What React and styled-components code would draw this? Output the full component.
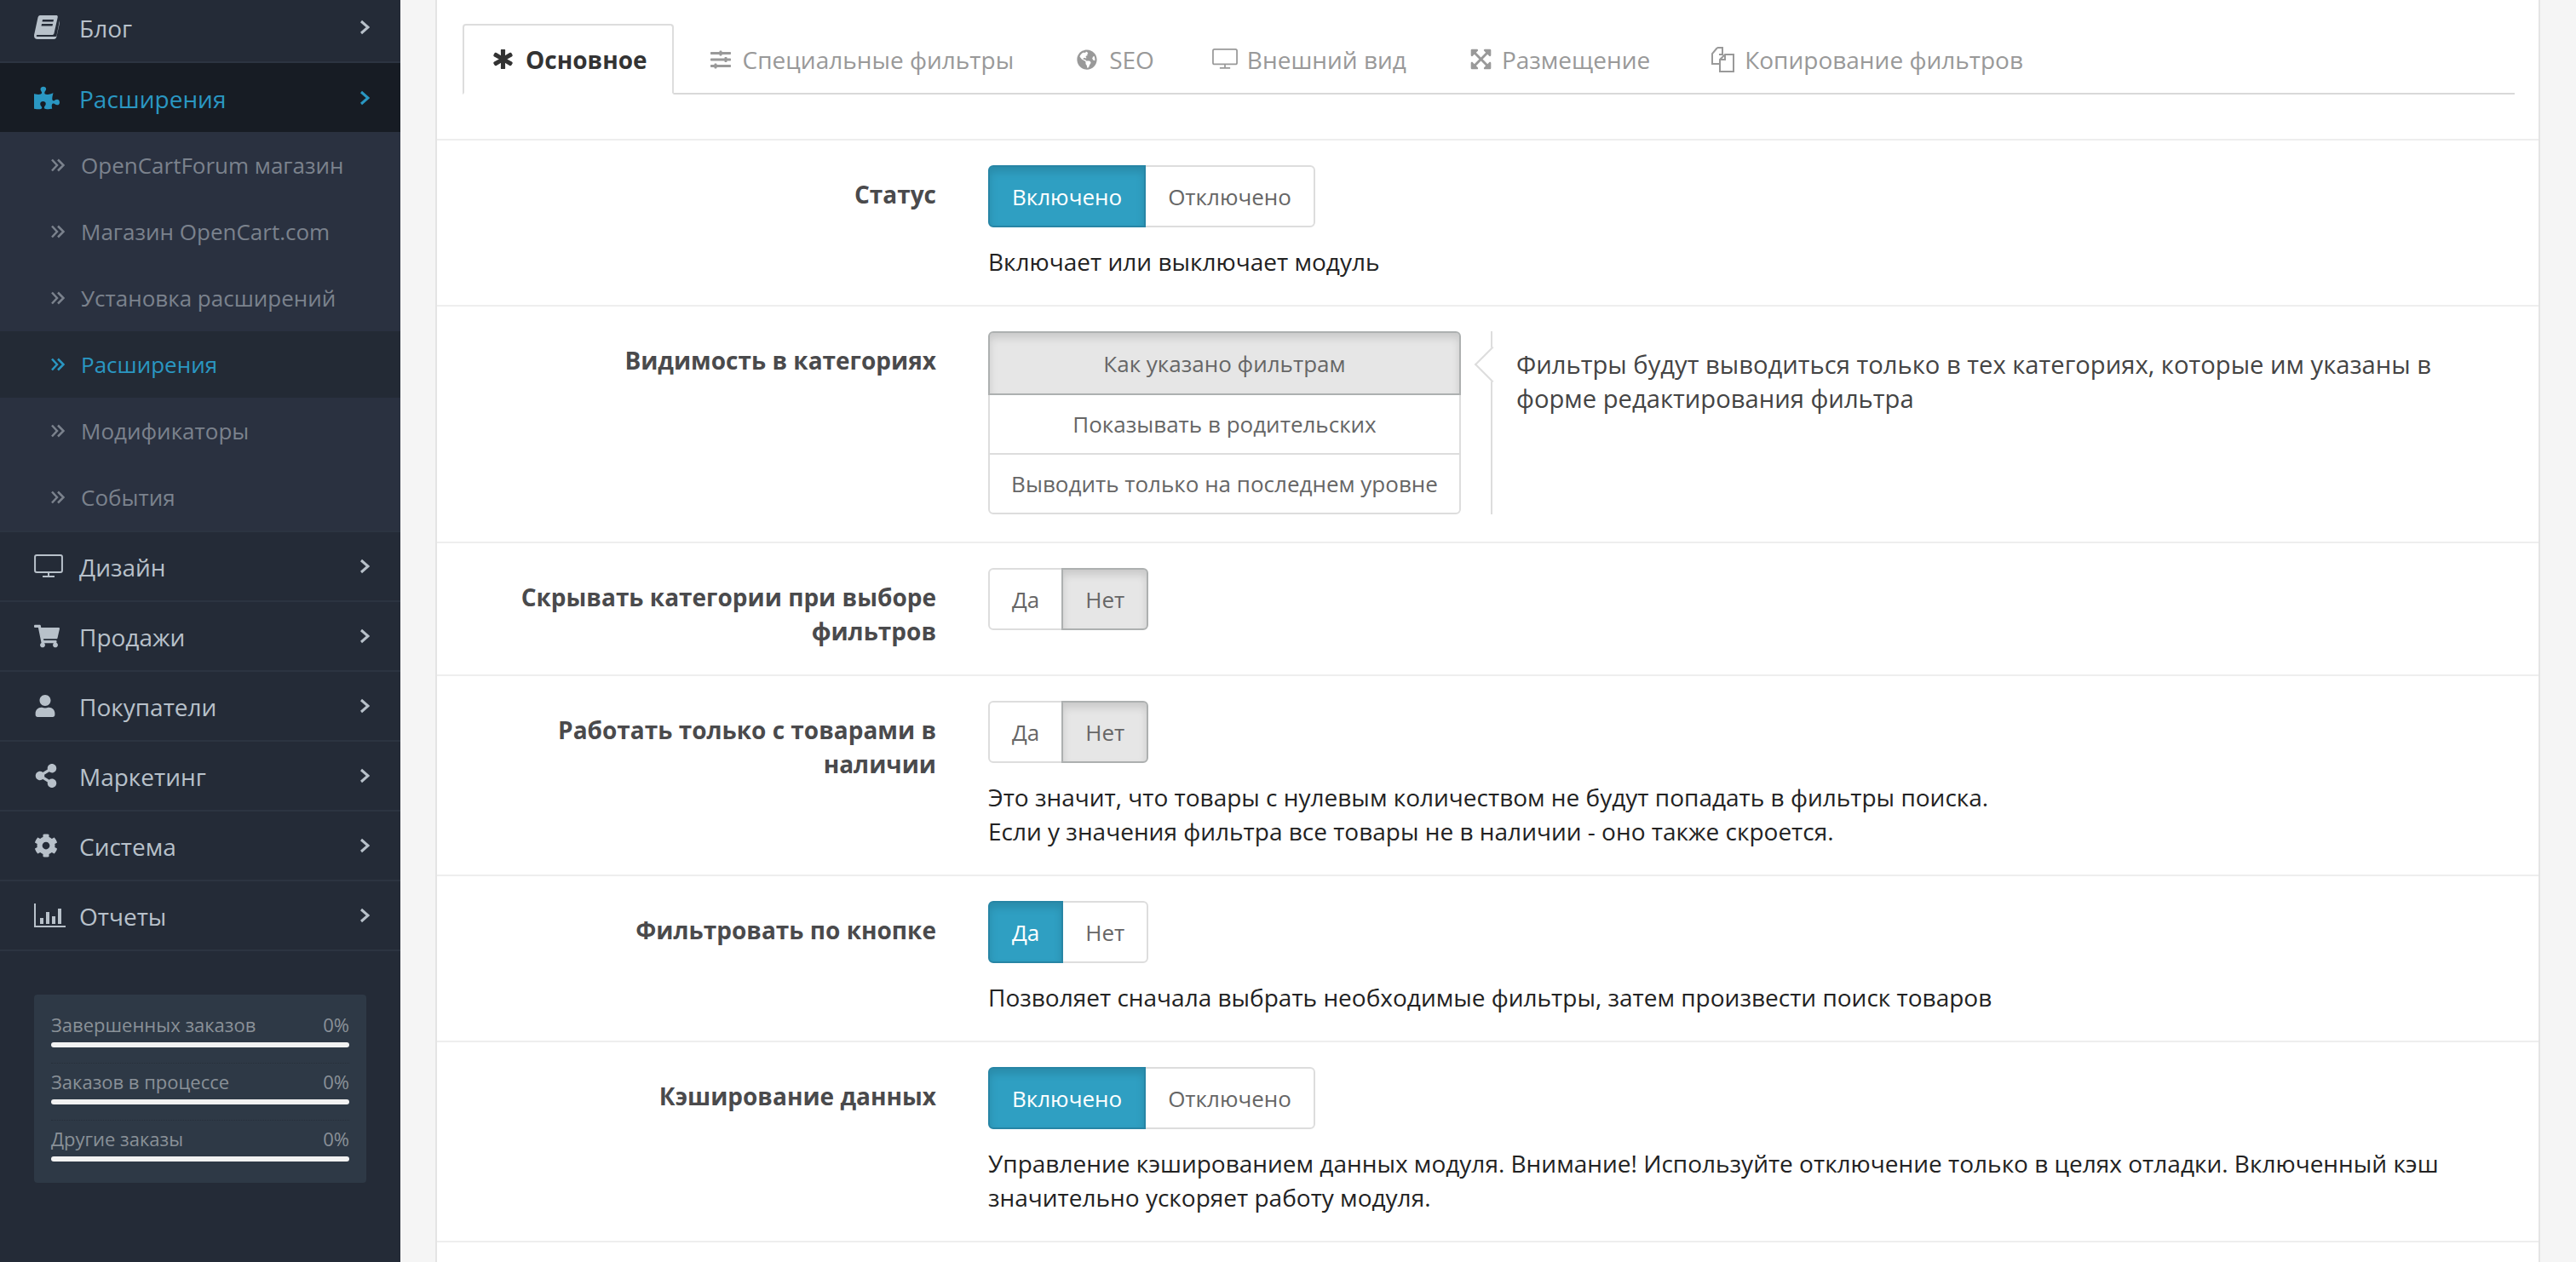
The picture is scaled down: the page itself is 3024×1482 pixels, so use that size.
import React from "react";
import styled, { createGlobalStyle } from "styled-components";
import {
  FaPuzzlePiece, FaShoppingCart, FaUser, FaShareAlt, FaCog,
  FaAsterisk, FaSlidersH, FaGlobeAmericas, FaExpandArrowsAlt,
} from "react-icons/fa";

const GlobalStyle = createGlobalStyle`
  html, body {
    margin: 0;
    height: 100%;
    overflow: hidden;
    background: #f5f5f5;
  }
  body {
    font-family: "Open Sans", "Noto Sans", sans-serif;
    font-size: 26px;
    line-height: 40px;
    color: #222;
  }
  #root { height: 100%; }
  * { box-sizing: border-box; }
`;

const Page = styled.div`
  display: flex;
  height: 1482px;
  overflow: hidden;
`;

const Sidebar = styled.nav`
  width: 470px;
  flex-shrink: 0;
  background: #242b37;
`;

const Menu = styled.div`
  margin-top: -8px;
`;

const MainItem = styled.div`
  display: flex;
  align-items: center;
  height: ${p => (p.$open ? 81 : 82)}px;
  padding: 0 36px 0 40px;
  font-size: 28px;
  color: ${p => (p.$open ? "#2a97c2" : "#b8c1ca")};
  background: ${p => (p.$open ? "#171c24" : "transparent")};
  border-bottom: ${p => (p.$open ? "none" : "2px solid #2c3441")};
`;

const IconSlot = styled.span`
  display: flex;
  align-items: center;
  width: 53px;
  font-size: 30px;
  flex-shrink: 0;
`;

const ItemLabel = styled.span`
  flex: 1;
  padding-top: 2px;
`;

const SubMenu = styled.div`
  background: #2a3140;
  border-bottom: 2px solid #2c3441;
`;

const SubItem = styled.div`
  display: flex;
  align-items: center;
  height: 78px;
  padding-left: 60px;
  color: ${p => (p.$active ? "#2a97c2" : "#7b828d")};
  background: ${p => (p.$active ? "#232a35" : "transparent")};
`;

const SubIcon = styled.span`
  display: flex;
  width: 35px;
`;

const Stats = styled.div`
  margin: 51px 40px 0;
  padding: 14px 20px 0;
  height: 221px;
  background: #2e3946;
  border-radius: 4px;
`;

const Stat = styled.div`
  height: 67px;
  border-bottom: ${p => (p.$last ? "none" : "1px dotted #262e39")};
`;

const StatLine = styled.div`
  display: flex;
  justify-content: space-between;
  font-size: 22px;
  line-height: 42px;
  color: #8a9198;
`;

const StatBar = styled.div`
  height: 6px;
  border-radius: 3px;
  background: #f2f2f2;
`;

const Main = styled.main`
  flex: 1;
  padding: 0 42px 0 41px;
  min-width: 0;
`;

const Panel = styled.div`
  height: 100%;
  background: #fff;
  border-left: 2px solid #e4e4e4;
  border-right: 2px solid #e4e4e4;
`;

const TabsWrap = styled.div`
  padding: 28px 28px 0 30px;
  height: 163px;
`;

const Tabs = styled.div`
  display: flex;
  height: 83px;
  border-bottom: 2px solid #d9d9d9;
`;

const Tab = styled.div`
  display: flex;
  align-items: center;
  height: ${p => (p.$active ? 83 : 81)}px;
  padding: 0 29px 0 34px;
  margin-right: ${p => p.$gap ?? 7}px;
  font-size: 28px;
  color: ${p => (p.$active ? "#333" : "#999")};
  font-weight: ${p => (p.$active ? 700 : 400)};
  background: #fff;
  border: ${p => (p.$active ? "2px solid #ddd" : "2px solid transparent")};
  border-bottom: ${p => (p.$active ? "2px solid #fff" : "none")};
  border-radius: 4px 4px 0 0;
`;

const TabIcon = styled.span`
  display: flex;
  align-items: center;
  width: ${p => p.$w || 38}px;
`;

const Row = styled.section`
  display: grid;
  grid-template-columns: 586px 1fr;
  column-gap: 61px;
  padding: 29px 30px ${p => p.$bottom || 31}px 0;
  border-top: 2px solid #eee;
`;

const Label = styled.div`
  padding: 14px 0 0 60px;
  text-align: right;
  font-size: 28px;
  font-weight: 700;
  color: #4a4a4c;
`;

const Value = styled.div`
  min-width: 0;
`;

const Toggle = styled.div`
  display: inline-flex;
  vertical-align: top;
`;

const ToggleBtn = styled.div`
  height: 73px;
  padding: 0 26px;
  display: flex;
  align-items: center;
  border: 2px solid ${p => (p.$on ? "#2785a5" : p.$off ? "#adb0b0" : "#ddd")};
  margin-left: ${p => (p.$first ? 0 : -2)}px;
  background: ${p => (p.$on ? "#2f9fc2" : p.$off ? "#e6e6e6" : "#fff")};
  color: ${p => (p.$on ? "#fff" : "#666")};
  box-shadow: ${p => (p.$on || p.$off ? "inset 0 6px 10px rgba(0,0,0,.125)" : "none")};
  border-radius: ${p => (p.$first ? "6px 0 0 6px" : "0 6px 6px 0")};
  position: relative;
  z-index: ${p => (p.$on || p.$off ? 1 : 0)};
`;

const Desc = styled.div`
  margin-top: 20px;
  font-size: 28px;
  color: #222;
`;

const Choice = styled.div`
  display: flex;
`;

const Stack = styled.div`
  width: 555px;
  flex-shrink: 0;
`;

const StackBtn = styled.div`
  height: ${p => (p.$active ? 75 : 72)}px;
  margin-top: ${p => (p.$active ? 0 : -2)}px;
  display: flex;
  align-items: center;
  justify-content: center;
  color: #666;
  background: ${p => (p.$active ? "#e6e6e6" : "#fff")};
  border: 2px solid ${p => (p.$active ? "#adb0b0" : "#ddd")};
  border-radius: ${p => p.$radius || 0};
  box-shadow: ${p => (p.$active ? "inset 0 6px 10px rgba(0,0,0,.125)" : "none")};
  position: relative;
  z-index: ${p => (p.$active ? 1 : 0)};
`;

const Hint = styled.div`
  position: relative;
  margin-left: 35px;
  padding: 19px 0 0 28px;
  width: 1140px;
  font-size: 29.2px;
  border-left: 2px solid #ddd;
  color: #444;
  &::before {
    content: "";
    position: absolute;
    left: -15px;
    top: 24px;
    width: 28px;
    height: 28px;
    background: #fff;
    border-left: 2px solid #ddd;
    border-bottom: 2px solid #ddd;
    transform: rotate(45deg);
  }
`;

const Chevron = () => (
  <svg width="12" height="18" viewBox="0 0 12 18" fill="none" stroke="currentColor" strokeWidth="3">
    <path d="M2 2l8 7-8 7" />
  </svg>
);

const DoubleChevron = () => (
  <svg width="16" height="16" viewBox="0 0 16 16" fill="none" stroke="currentColor" strokeWidth="2.500">
    <path d="M1 1.500 7 8l-6 6.500M8 1.500 14.500 8 8 14.500" />
  </svg>
);

const BookIcon = () => (
  <svg width="30" height="28" viewBox="0 0 30 28">
    <path fill="#b8c1ca" d="M7 0h19c1.500 0 2 1 1.700 2.400L23.500 21c-.3 1.500-1.200 2-2.500 2H4c-1.500 0-1.800 2-.3 2h21c1 0 1.500-.5 1.800-1.500L30 6c.3 0 .3 1 .2 2l-3.800 17c-.4 1.800-1.400 3-3.200 3H4c-2.500 0-4-1.500-4-4 0-1 .2-2 .5-3L4.500 2.500C4.900 1 5.800 0 7 0z" />
    <path fill="#242b37" d="M10 5h13l-.5 2.500h-13zM9 10h13l-.5 2.500h-13z" />
  </svg>
);

const DesktopIcon = ({ color, width = 34 }) => (
  <svg width={width} height={width * 0.82} viewBox="0 0 34 28" fill="none" stroke={color} strokeWidth="2">
    <rect x="1" y="1" width="32" height="20" rx="2" />
    <path d="M17 21v4M10 26h14" />
  </svg>
);

const BarsIcon = () => (
  <svg width="37" height="28" viewBox="0 0 37 28" fill="#b8c1ca">
    <path d="M0 0h2v26h35v2H0z" />
    <path d="M7 17h4v7H7zM14 10h4v14h-4zM21 15h4v9h-4zM28 6h4v18h-4z" />
  </svg>
);

const FilesIcon = () => (
  <svg width="28" height="30" viewBox="0 0 28 30" fill="none" stroke="#999" strokeWidth="2">
    <path d="M8 1h6v8l-4 .1M8 1 2 8v12h8" />
    <path d="M17 9h10v20H11V15zM17 9v6h-6" />
  </svg>
);

const stats = ["Завершенных заказов", "Заказов в процессе", "Другие заказы"];

const mainBefore = [
  { label: "Дизайн", icon: <DesktopIcon color="#b8c1ca" /> },
  { label: "Продажи", icon: <FaShoppingCart /> },
  { label: "Покупатели", icon: <FaUser size={26} /> },
  { label: "Маркетинг", icon: <FaShareAlt size={28} /> },
  { label: "Система", icon: <FaCog size={28} /> },
  { label: "Отчеты", icon: <BarsIcon /> },
];

const subItems = [
  { label: "OpenCartForum магазин" },
  { label: "Магазин OpenCart.com" },
  { label: "Установка расширений" },
  { label: "Расширения", active: true },
  { label: "Модификаторы" },
  { label: "События" },
];

const tabs = [
  { label: "Основное", icon: <FaAsterisk size={23} stroke="currentColor" strokeWidth={30} />, active: true },
  { label: "Специальные фильтры", icon: <FaSlidersH size={24} /> },
  { label: "SEO", icon: <FaGlobeAmericas size={24} />, gap: 1 },
  { label: "Внешний вид", icon: <DesktopIcon color="#999" width={30} />, w: 41 },
  { label: "Размещение", icon: <FaExpandArrowsAlt size={27} />, w: 38, gap: 4 },
  { label: "Копирование фильтров", icon: <FilesIcon />, w: 40 },
];

const Switch = ({ left, right, value }) => (
  <Toggle>
    <ToggleBtn $first $on={value === "left"}>{left}</ToggleBtn>
    <ToggleBtn $off={value === "right"}>{right}</ToggleBtn>
  </Toggle>
);

const App = () => (
  <Page>
    <GlobalStyle />
    <Sidebar>
      <Menu>
        <MainItem>
          <IconSlot><BookIcon /></IconSlot>
          <ItemLabel>Блог</ItemLabel>
          <Chevron />
        </MainItem>
        <MainItem $open>
          <IconSlot><FaPuzzlePiece /></IconSlot>
          <ItemLabel>Расширения</ItemLabel>
          <Chevron />
        </MainItem>
        <SubMenu>
          {subItems.map(item => (
            <SubItem key={item.label} $active={item.active}>
              <SubIcon><DoubleChevron /></SubIcon>
              {item.label}
            </SubItem>
          ))}
        </SubMenu>
        {mainBefore.map(item => (
          <MainItem key={item.label}>
            <IconSlot>{item.icon}</IconSlot>
            <ItemLabel>{item.label}</ItemLabel>
            <Chevron />
          </MainItem>
        ))}
      </Menu>
      <Stats>
        {stats.map((name, i) => (
          <Stat key={name} $last={i === 2}>
            <StatLine>
              <span>{name}</span>
              <span>0%</span>
            </StatLine>
            <StatBar />
          </Stat>
        ))}
      </Stats>
    </Sidebar>
    <Main>
      <Panel>
        <TabsWrap>
          <Tabs>
            {tabs.map(tab => (
              <Tab key={tab.label} $active={tab.active} $gap={tab.gap}>
                <TabIcon $w={tab.w}>{tab.icon}</TabIcon>
                {tab.label}
              </Tab>
            ))}
          </Tabs>
        </TabsWrap>
        <Row>
          <Label>Статус</Label>
          <Value>
            <Switch left="Включено" right="Отключено" value="left" />
            <Desc>Включает или выключает модуль</Desc>
          </Value>
        </Row>
        <Row $bottom={32}>
          <Label>Видимость в категориях</Label>
          <Choice>
            <Stack>
              <StackBtn $active $radius="6px 6px 0 0">Как указано фильтрам</StackBtn>
              <StackBtn>Показывать в родительских</StackBtn>
              <StackBtn $radius="0 0 6px 6px">Выводить только на последнем уровне</StackBtn>
            </Stack>
            <Hint>Фильтры будут выводиться только в тех категориях, которые им указаны в форме редактирования фильтра</Hint>
          </Choice>
        </Row>
        <Row>
          <Label>Скрывать категории при выборе фильтров</Label>
          <Value>
            <Switch left="Да" right="Нет" value="right" />
          </Value>
        </Row>
        <Row>
          <Label>Работать только с товарами в наличии</Label>
          <Value>
            <Switch left="Да" right="Нет" value="right" />
            <Desc>
              Это значит, что товары с нулевым количеством не будут попадать в фильтры поиска.<br />
              Если у значения фильтра все товары не в наличии - оно также скроется.
            </Desc>
          </Value>
        </Row>
        <Row>
          <Label>Фильтровать по кнопке</Label>
          <Value>
            <Switch left="Да" right="Нет" value="left" />
            <Desc>Позволяет сначала выбрать необходимые фильтры, затем произвести поиск товаров</Desc>
          </Value>
        </Row>
        <Row>
          <Label>Кэширование данных</Label>
          <Value>
            <Switch left="Включено" right="Отключено" value="left" />
            <Desc>
              Управление кэшированием данных модуля. Внимание! Используйте отключение только в целях отладки. Включенный кэш значительно ускоряет работу модуля.
            </Desc>
          </Value>
        </Row>
        <Row />
      </Panel>
    </Main>
  </Page>
);

export default App;
